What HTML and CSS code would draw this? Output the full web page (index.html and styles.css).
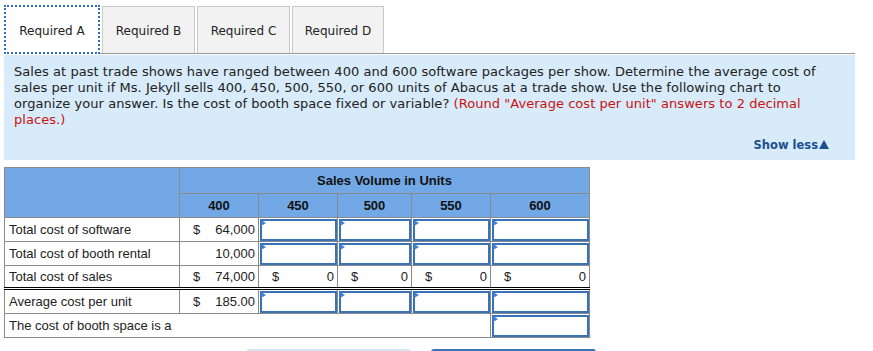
FILE: index.html
```html
<!DOCTYPE html>
<html>
<head>
<meta charset="utf-8">
<link rel="stylesheet" href="styles.css">
</head>
<body>
<div class="tabs">
  <div class="tab active">Required A</div>
  <div class="tab w93">Required B</div>
  <div class="tab w93">Required C</div>
  <div class="tab">Required D</div>
</div>
<div class="panel">
  <p class="question"><span>Sales at past trade shows have ranged between 400 and 600 software packages per show. Determine the average cost of sales per unit if Ms. Jekyll sells 400, 450, 500, 550, or 600 units of Abacus at a trade show. Use the following chart to organize your answer. Is the cost of booth space fixed or variable? </span><span class="red">(Round "Average cost per unit" answers to 2 decimal places.)</span></p>
  <div class="showless">Show less<svg class="tri" width="10" height="9" viewBox="0 0 10 9"><path d="M5 0 L10 9 L0 9 Z" fill="#1d4f8f"/></svg></div>
</div>
<table class="grid">
  <colgroup>
    <col class="c0"><col class="c1"><col class="c2"><col class="c3"><col class="c4"><col class="c5">
  </colgroup>
  <tr class="h1">
    <th rowspan="2"></th>
    <th colspan="5">Sales Volume in Units</th>
  </tr>
  <tr class="h2">
    <th>400</th><th>450</th><th>500</th><th>550</th><th>600</th>
  </tr>
  <tr>
    <td class="label">Total cost of software</td>
    <td><div class="money"><span>$</span><span>64,000</span></div></td>
    <td class="in"><div class="box"><i class="flag"></i></div></td>
    <td class="in"><div class="box"><i class="flag"></i></div></td>
    <td class="in"><div class="box"><i class="flag"></i></div></td>
    <td class="in"><div class="box"><i class="flag"></i></div></td>
  </tr>
  <tr>
    <td class="label">Total cost of booth rental</td>
    <td><div class="money"><span></span><span>10,000</span></div></td>
    <td class="in"><div class="box"><i class="flag"></i></div></td>
    <td class="in"><div class="box"><i class="flag"></i></div></td>
    <td class="in"><div class="box"><i class="flag"></i></div></td>
    <td class="in"><div class="box"><i class="flag"></i></div></td>
  </tr>
  <tr class="total">
    <td class="label">Total cost of sales</td>
    <td><div class="money"><span>$</span><span>74,000</span></div></td>
    <td><div class="money"><span>$</span><span>0</span></div></td>
    <td><div class="money"><span>$</span><span>0</span></div></td>
    <td><div class="money"><span>$</span><span>0</span></div></td>
    <td><div class="money"><span>$</span><span>0</span></div></td>
  </tr>
  <tr>
    <td class="label">Average cost per unit</td>
    <td><div class="money"><span>$</span><span>185.00</span></div></td>
    <td class="in"><div class="box"><i class="flag"></i></div></td>
    <td class="in"><div class="box"><i class="flag"></i></div></td>
    <td class="in"><div class="box"><i class="flag"></i></div></td>
    <td class="in"><div class="box"><i class="flag"></i></div></td>
  </tr>
  <tr class="last">
    <td class="label" colspan="5">The cost of booth space is a</td>
    <td class="in"><div class="box"><i class="flag"></i></div></td>
  </tr>
</table>
<div class="buttons">
  <div class="btn light"></div>
  <div class="btn dark"></div>
</div>
</body>
</html>
```
FILE: styles.css
```css
html, body {
  margin: 0;
  padding: 0;
  background: #ffffff;
}
body {
  font-family: "DejaVu Sans", Verdana, sans-serif;
  color: #222222;
  width: 873px;
  height: 351px;
  overflow: hidden;
}
.tabs {
  display: flex;
  gap: 2px;
  margin-left: 4px;
  width: 851px;
  padding-top: 6px;
  border-bottom: 1px solid #9a9a9a;
  height: 47px;
  box-sizing: content-box;
}
.tab {
  width: 92px;
  height: 47px;
  box-sizing: border-box;
  border: 1px solid #c8c8c8;
  border-bottom: none;
  background: #f2f2f2;
  font-size: 12px;
  display: flex;
  align-items: center;
  justify-content: center;
  padding-top: 2px;
  color: #222;
}
.tab.w93 { width: 93px; }
.tab.active {
  width: 96px;
  background: #ffffff;
  border: 2px dotted #2f6fc4;
  margin-top: -1px;
  height: 49px;
}
.panel {
  margin: 1px 0 0 4px;
  width: 851px;
  height: 105px;
  box-sizing: border-box;
  background: #d7ebfa;
  padding: 9px 10px 0 10px;
  position: relative;
}
.question {
  margin: 0;
  font-size: 13px;
  line-height: 16px;
  color: #222;
  padding-right: 26px;
  letter-spacing: 0.05px;
}
.red { color: #cc1111; }
.showless {
  position: absolute;
  right: 26px;
  top: 83px;
  font-size: 11.5px;
  font-weight: bold;
  color: #1d4f8f;
  display: flex;
  align-items: center;
}
.tri {
  margin-left: 1px;
  margin-top: -1px;
}
.grid {
  margin: 7px 0 0 4px;
  border-collapse: collapse;
  table-layout: fixed;
  width: 585px;
  font-family: "Liberation Sans", Arial, sans-serif;
  font-size: 13px;
  color: #222;
}
col.c0 { width: 175px; }
col.c1 { width: 79px; }
col.c2 { width: 79px; }
col.c3 { width: 74px; }
col.c4 { width: 79px; }
col.c5 { width: 99px; }
.grid th {
  background: #71a8e5;
  border: 1px solid #8a8a8a;
  font-size: 13px;
  font-weight: bold;
  color: #111;
  text-align: center;
  padding: 0;
}
.h1 th { height: 25px; }
.h2 th { height: 23px; }
.grid td {
  border: 1px solid #8a8a8a;
  height: 23px;
  padding: 0;
  vertical-align: middle;
}
.grid td.label {
  padding-left: 4px;
  text-align: left;
}
.money {
  display: flex;
  justify-content: space-between;
  padding: 0 3px 0 13px;
}
.total td {
  border-top: 1px solid #000;
  border-bottom: 3px double #000;
  height: 21px;
}
.last td.label { border-right: 1px solid #8a8a8a; }
td.in { padding: 0; }
.box {
  position: relative;
  height: 22px;
  box-sizing: border-box;
  border: 2px solid #3a72b9;
  background: #fff;
  margin: 0 0 0 1px;
}
.flag {
  position: absolute;
  left: -1px;
  top: -1px;
  width: 0;
  height: 0;
  border-top: 3px solid transparent;
  border-bottom: 3px solid transparent;
  border-left: 5px solid #3b7fd8;
}
.buttons {
  display: flex;
  gap: 20px;
  padding-left: 246px;
  margin-top: 11px;
}
.btn {
  width: 165px;
  height: 12px;
  border-radius: 3px 3px 0 0;
}
.btn.light { background: #d5e5f6; }
.btn.dark { background: #3a74bd; }
```
